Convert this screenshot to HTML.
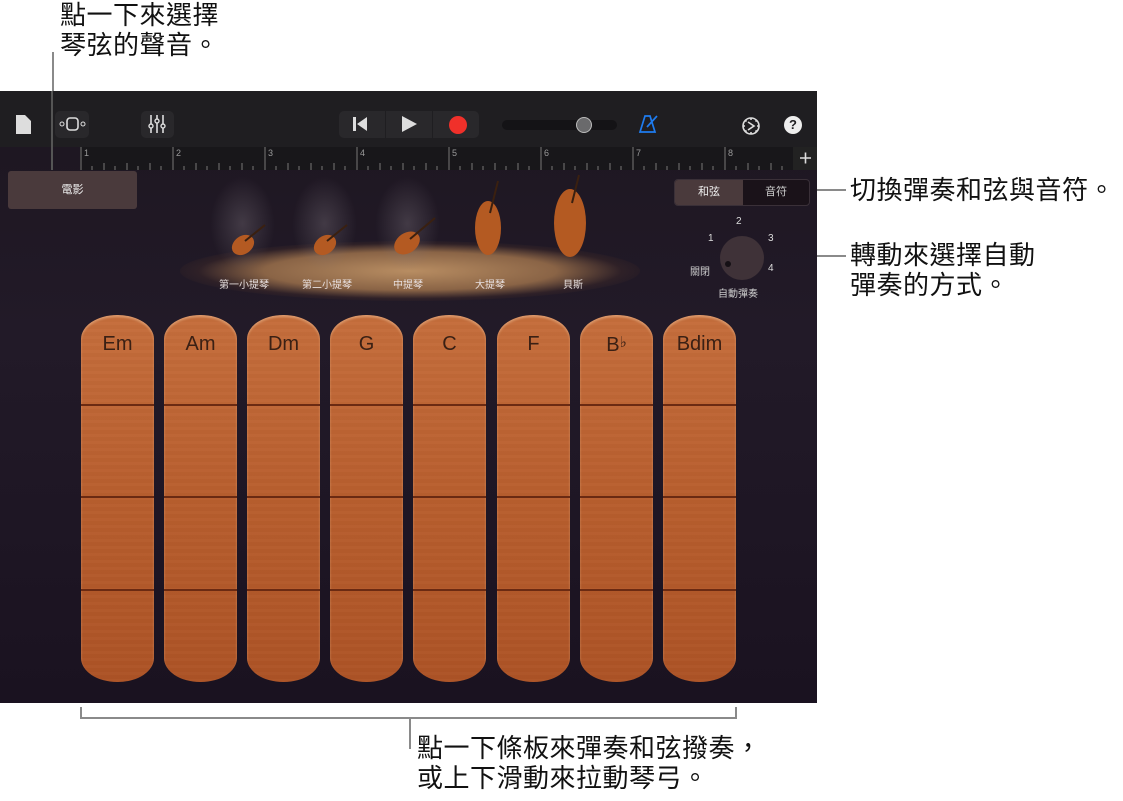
<!DOCTYPE html>
<html><head><meta charset="utf-8"><style>
*{margin:0;padding:0;box-sizing:border-box}
body{width:1123px;height:801px;background:#fff;position:relative;overflow:hidden;font-family:"Liberation Sans","Noto Sans CJK TC",sans-serif}
.a{position:absolute}
.call{position:absolute;font-size:26px;line-height:30px;letter-spacing:0.5px;color:#111;font-family:"Liberation Sans","Noto Sans CJK TC",sans-serif}
.ln{position:absolute;background:#8a8a8a}
#scr{position:absolute;left:0;top:91px;width:817px;height:612px;background:linear-gradient(#1d1620,#221a28 40%,#1a1220 100%);overflow:hidden}
#tb{position:absolute;left:0;top:0;width:817px;height:56px;background:#1f1e21}
#rl{position:absolute;left:80px;top:56px;width:737px;height:23px;background:#18171a}
.btn{position:absolute;background:#29282b;border-radius:5px}
.strip{position:absolute;top:224px;width:73px;height:367px;border-radius:36px/24px;background:repeating-linear-gradient(180deg,rgba(255,255,255,.015) 0 3px,rgba(0,0,0,.015) 3px 7px),linear-gradient(#c56e3c,#b85e2e 50%,#ad5326);box-shadow:inset 0 2px 2px rgba(255,220,180,.4)}
.strip .t{position:absolute;top:18px;width:100%;text-align:center;font-size:20px;color:#3a2014}
.strip .d{position:absolute;left:0;width:100%;height:2px;background:#6b2a12}
.lab{position:absolute;font-size:10px;color:#e8e0e0;text-align:center;width:70px}
</style></head><body>
<div class="call" style="left:60px;top:0">點一下來選擇<br>琴弦的聲音。</div>
<div class="call" style="left:850px;top:175px">切換彈奏和弦與音符。</div>
<div class="call" style="left:850px;top:240px">轉動來選擇自動<br>彈奏的方式。</div>
<div class="call" style="left:417px;top:733px">點一下條板來彈奏和弦撥奏，<br>或上下滑動來拉動琴弓。</div>
<div class="ln" style="left:52px;top:52px;width:2px;height:120px"></div>
<div class="ln" style="left:810px;top:189px;width:36px;height:2px"></div>
<div class="ln" style="left:770px;top:255px;width:76px;height:2px"></div>
<div class="ln" style="left:80px;top:707px;width:2px;height:11px"></div>
<div class="ln" style="left:80px;top:717px;width:657px;height:2px"></div>
<div class="ln" style="left:735px;top:707px;width:2px;height:11px"></div>
<div class="ln" style="left:409px;top:717px;width:2px;height:32px"></div>
<div id="scr">
 <div id="tb">
  <svg class="a" style="left:16px;top:24px" width="15" height="19"><path d="M0 0h9l6 6v13H0z" fill="#ddd"/></svg>
  <div class="btn" style="left:55px;top:20px;width:34px;height:27px"></div>
  <svg class="a" style="left:58px;top:25px" width="28" height="16"><rect x="9" y="2" width="11" height="12" rx="3" fill="none" stroke="#ddd" stroke-width="1.6"/><circle cx="4" cy="8" r="2" fill="none" stroke="#ddd"/><circle cx="25" cy="8" r="2" fill="none" stroke="#ddd"/></svg>
  <div class="btn" style="left:141px;top:20px;width:33px;height:27px"></div>
  <svg class="a" style="left:147px;top:24px" width="20" height="18"><g stroke="#ddd" stroke-width="1.6"><path d="M4 0v18M10 0v18M16 0v18"/></g><g fill="#29282b" stroke="#ddd" stroke-width="1.4"><circle cx="4" cy="11" r="2"/><circle cx="10" cy="6" r="2"/><circle cx="16" cy="11" r="2"/></g></svg>
  <div class="btn" style="left:339px;top:20px;width:140px;height:27px"></div>
  <div class="a" style="left:385px;top:20px;width:1px;height:27px;background:#1f1e21"></div>
  <div class="a" style="left:432px;top:20px;width:1px;height:27px;background:#1f1e21"></div>
  <svg class="a" style="left:351px;top:25px" width="18" height="16"><path d="M2 1h3v14H2zM16 1v14L6 8z" fill="#ddd"/></svg>
  <svg class="a" style="left:400px;top:24px" width="18" height="18"><path d="M2 1l15 8-15 8z" fill="#ddd"/></svg>
  <div class="a" style="left:449px;top:25px;width:18px;height:18px;border-radius:50%;background:#f0302a"></div>
  <div class="a" style="left:502px;top:29px;width:115px;height:10px;border-radius:5px;background:#141316"></div>
  <div class="a" style="left:576px;top:26px;width:16px;height:16px;border-radius:50%;background:#6a6a6c;border:1px solid #bbb"></div>
  <svg class="a" style="left:638px;top:24px" width="20" height="19"><path d="M7 1h5l5 16H2zM9 12l10-11" fill="none" stroke="#1e7cf0" stroke-width="1.7"/></svg>
  <svg class="a" style="left:740px;top:24px" width="22" height="22"><circle cx="11" cy="11" r="8" fill="none" stroke="#ddd" stroke-width="1.6"/><path d="M11 3v2M11 17v2M3 11h2M17 11h2M5 5l1.5 1.5M15.5 15.5L17 17M5 17l1.5-1.5M15.5 6.5L17 5M8 7l6 4-6 4" fill="none" stroke="#ddd" stroke-width="1.6"/></svg>
  <div class="a" style="left:784px;top:25px;width:18px;height:18px;border-radius:50%;background:#eee;color:#1f1e21;font-size:13px;font-weight:bold;text-align:center;line-height:18px">?</div>
 </div>
 <div class="a" style="left:51px;top:0;width:2px;height:79px;background:#555"></div>
 <div id="rl">
  <svg width="737" height="23">
   <g stroke="#777" stroke-width="1">
    <path d="M1 0v23M93 0v23M185 0v23M277 0v23M369 0v23M461 0v23M553 0v23M645 0v23"/>
    <path d="M24 16v7M47 16v7M70 16v7M116 16v7M139 16v7M162 16v7M208 16v7M231 16v7M254 16v7M300 16v7M323 16v7M346 16v7M392 16v7M415 16v7M438 16v7M484 16v7M507 16v7M530 16v7M576 16v7M599 16v7M622 16v7M668 16v7M691 16v7M714 16v7"/>
    <path d="M12 19v4M35 19v4M58 19v4M81 19v4M104 19v4M127 19v4M150 19v4M173 19v4M196 19v4M219 19v4M242 19v4M265 19v4M288 19v4M311 19v4M334 19v4M357 19v4M380 19v4M403 19v4M426 19v4M449 19v4M472 19v4M495 19v4M518 19v4M541 19v4M564 19v4M587 19v4M610 19v4M633 19v4M656 19v4M679 19v4M702 19v4"/>
   </g>
   <g fill="#999" font-size="9" font-family="Liberation Sans"><text x="4" y="9">1</text><text x="96" y="9">2</text><text x="188" y="9">3</text><text x="280" y="9">4</text><text x="372" y="9">5</text><text x="464" y="9">6</text><text x="556" y="9">7</text><text x="648" y="9">8</text></g>
   <rect x="713" y="0" width="24" height="23" fill="#222"/><path d="M720 11h11M725.5 5.5v11" stroke="#ddd" stroke-width="1.6"/>
  </svg>
 </div>
 <div class="a" style="left:8px;top:80px;width:129px;height:38px;background:#4a3a3c;border-radius:3px;color:#eee;font-size:11px;text-align:center;line-height:38px">電影</div>
 <div class="a" style="left:180px;top:150px;width:460px;height:60px;border-radius:50%;background:radial-gradient(ellipse,#b88d62 0%,#8a6446 45%,rgba(60,40,40,.5) 65%,rgba(40,28,36,0) 75%)"></div>
 <div class="a" style="left:210px;top:85px;width:65px;height:95px;background:radial-gradient(ellipse,rgba(130,120,130,.35),rgba(0,0,0,0) 70%)"></div>
 <div class="a" style="left:292px;top:85px;width:65px;height:95px;background:radial-gradient(ellipse,rgba(130,120,130,.35),rgba(0,0,0,0) 70%)"></div>
 <div class="a" style="left:375px;top:85px;width:65px;height:95px;background:radial-gradient(ellipse,rgba(130,120,130,.35),rgba(0,0,0,0) 70%)"></div>
 <svg class="a" style="left:215px;top:82px" width="420" height="100">
  <g fill="#b45a22"><ellipse cx="28" cy="72" rx="12" ry="9" transform="rotate(-35 28 72)"/><ellipse cx="110" cy="72" rx="12" ry="9" transform="rotate(-35 110 72)"/><ellipse cx="192" cy="70" rx="14" ry="10" transform="rotate(-35 192 70)"/>
  <ellipse cx="273" cy="55" rx="13" ry="27"/><ellipse cx="355" cy="50" rx="16" ry="34"/></g>
  <g stroke="#3a2010" stroke-width="2"><path d="M30 68L50 52M112 68L132 52M195 66L220 45M275 40L283 8M357 30L364 2"/></g>
 </svg>
 <div class="lab" style="left:209px;top:185px">第一小提琴</div>
 <div class="lab" style="left:292px;top:185px">第二小提琴</div>
 <div class="lab" style="left:373px;top:185px">中提琴</div>
 <div class="lab" style="left:455px;top:185px">大提琴</div>
 <div class="lab" style="left:538px;top:185px">貝斯</div>
 <div class="a" style="left:674px;top:88px;width:136px;height:27px;border:1px solid #3a3038;border-radius:4px;background:#1a1219"></div>
 <div class="a" style="left:675px;top:89px;width:68px;height:25px;background:#4a3a3c;border-radius:3px 0 0 3px;color:#eee;font-size:11px;text-align:center;line-height:25px">和弦</div>
 <div class="a" style="left:743px;top:89px;width:66px;height:25px;color:#ccc;font-size:11px;text-align:center;line-height:25px">音符</div>
 <div class="a" style="left:720px;top:145px;width:44px;height:44px;border-radius:50%;background:#3f3238"></div>
 <div class="a" style="left:725px;top:170px;width:6px;height:6px;border-radius:50%;background:#151015"></div>
 <div class="a" style="left:736px;top:125px;font-size:10px;color:#ddd">2</div>
 <div class="a" style="left:708px;top:142px;font-size:10px;color:#ddd">1</div>
 <div class="a" style="left:768px;top:142px;font-size:10px;color:#ddd">3</div>
 <div class="a" style="left:768px;top:172px;font-size:10px;color:#ddd">4</div>
 <div class="a" style="left:690px;top:172px;font-size:10px;color:#ccc">關閉</div>
 <div class="a" style="left:718px;top:194px;font-size:10px;color:#ccc">自動彈奏</div>
 <div class="strip" style="left:81px"><div class="t">Em</div><div class="d" style="top:89px"></div><div class="d" style="top:181px"></div><div class="d" style="top:274px"></div></div>
 <div class="strip" style="left:164px"><div class="t">Am</div><div class="d" style="top:89px"></div><div class="d" style="top:181px"></div><div class="d" style="top:274px"></div></div>
 <div class="strip" style="left:247px"><div class="t">Dm</div><div class="d" style="top:89px"></div><div class="d" style="top:181px"></div><div class="d" style="top:274px"></div></div>
 <div class="strip" style="left:330px"><div class="t">G</div><div class="d" style="top:89px"></div><div class="d" style="top:181px"></div><div class="d" style="top:274px"></div></div>
 <div class="strip" style="left:413px"><div class="t">C</div><div class="d" style="top:89px"></div><div class="d" style="top:181px"></div><div class="d" style="top:274px"></div></div>
 <div class="strip" style="left:497px"><div class="t">F</div><div class="d" style="top:89px"></div><div class="d" style="top:181px"></div><div class="d" style="top:274px"></div></div>
 <div class="strip" style="left:580px"><div class="t">B<span style="font-family:'DejaVu Sans',sans-serif;font-size:15px;vertical-align:4px">♭</span></div><div class="d" style="top:89px"></div><div class="d" style="top:181px"></div><div class="d" style="top:274px"></div></div>
 <div class="strip" style="left:663px"><div class="t">Bdim</div><div class="d" style="top:89px"></div><div class="d" style="top:181px"></div><div class="d" style="top:274px"></div></div>
</div>
</body></html>
